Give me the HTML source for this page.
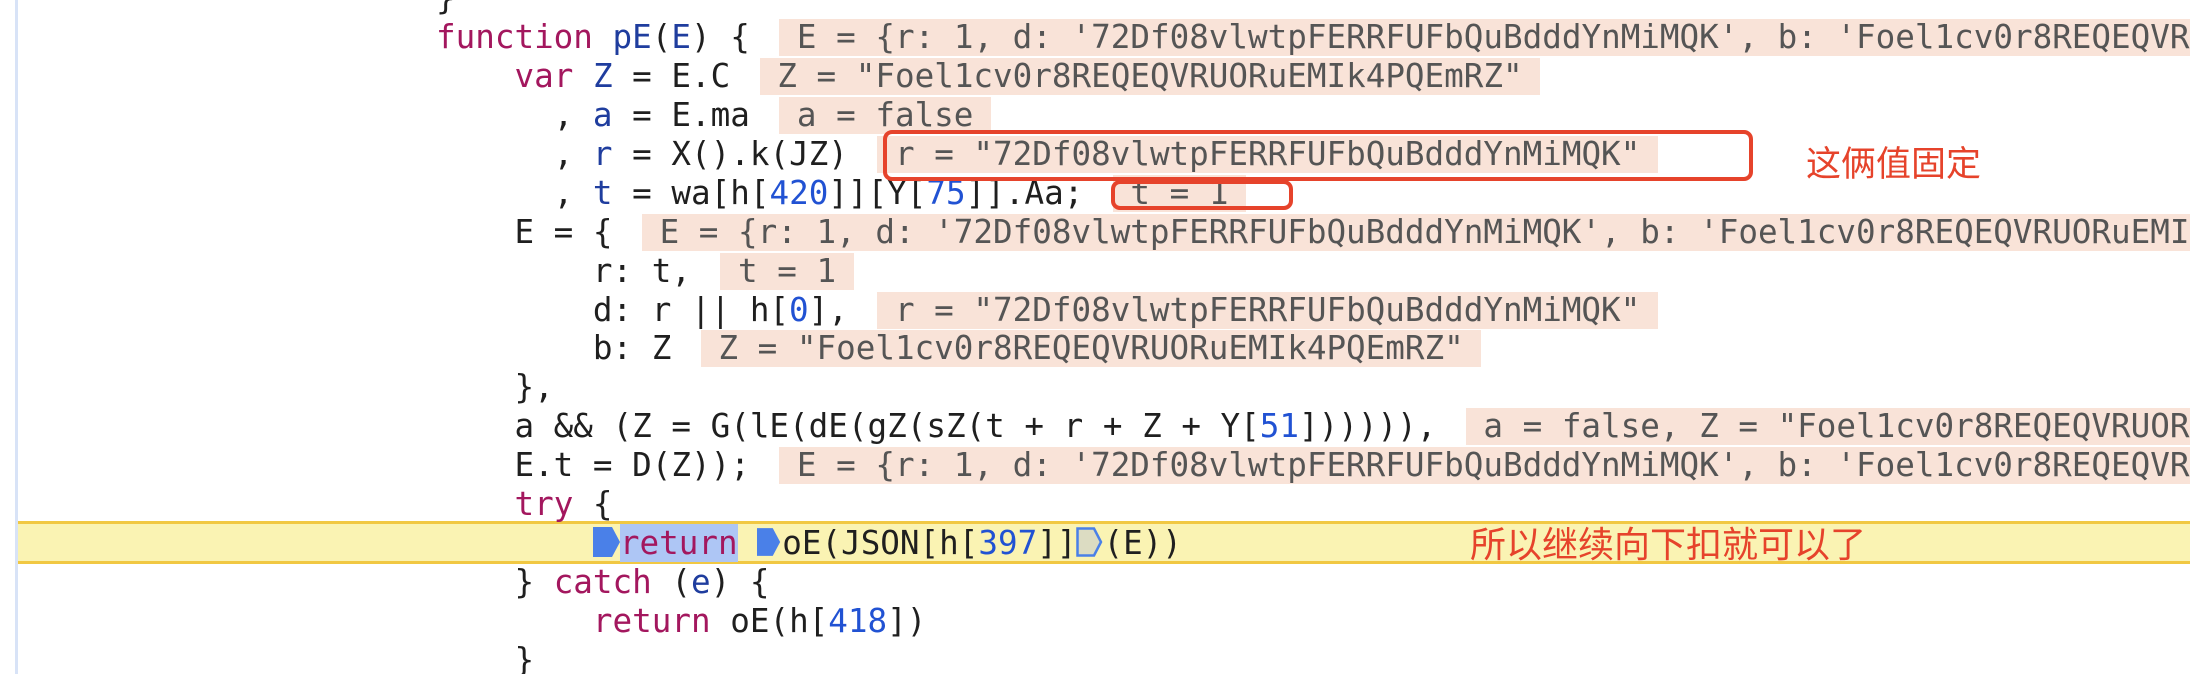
<!DOCTYPE html>
<html><head><meta charset="utf-8"><style>
html,body{margin:0;padding:0;width:2190px;height:674px;overflow:hidden;background:#fff;position:relative}
.gut{position:absolute;left:15px;top:0;width:3px;height:674px;background:#d8e3f7}
.hl{position:absolute;left:18px;right:0;top:521px;height:37px;background:#faf3b3;border-top:3px solid #f1c843;border-bottom:3px solid #f1c843}
.code{position:absolute;left:436px;top:-20.6px;font-family:"DejaVu Sans Mono","Liberation Mono",monospace;font-size:32.6px;line-height:38.9px;color:#1f1f1f;white-space:normal}
.l{height:38.9px;white-space:pre;overflow:visible}
.k{color:#a3175e}.d{color:#1f3d9e}.n{color:#2152d3}
.v{display:inline-block;height:37px;line-height:37px;vertical-align:top;margin-top:1px;background:#f9e3d8;color:#555;padding:0 0.9ch;margin-left:1.5ch}
.rb{position:absolute;border:4px solid #e6432b;border-radius:9px;box-sizing:border-box}
.zh{position:absolute;color:#e6432b;font-family:"Liberation Sans","Noto Sans CJK SC",sans-serif;white-space:nowrap}
.mk{display:inline-block;width:27px;height:30px;vertical-align:middle;margin-top:-6px}
.sel{background:#aec6f5}
</style></head><body>
<div class="gut"></div>
<div class="hl"></div>
<div class="code"><div class="l">}</div><div class="l"><span class="k">function</span> <span class="d">pE</span>(<span class="d">E</span>) {<span class="v">E = {r: 1, d: '72Df08vlwtpFERRFUFbQuBdddYnMiMQK', b: 'Foel1cv0r8REQEQVRUORuEMIk4PQEmRZ'}</span></div><div class="l">    <span class="k">var</span> <span class="d">Z</span> = E.C<span class="v">Z = "Foel1cv0r8REQEQVRUORuEMIk4PQEmRZ"</span></div><div class="l">      , <span class="d">a</span> = E.ma<span class="v">a = false</span></div><div class="l">      , <span class="d">r</span> = X().k(JZ)<span class="v">r = "72Df08vlwtpFERRFUFbQuBdddYnMiMQK"</span></div><div class="l">      , <span class="d">t</span> = wa[h[<span class="n">420</span>]][Y[<span class="n">75</span>]].Aa;<span class="v">t = 1</span></div><div class="l">    E = {<span class="v">E = {r: 1, d: '72Df08vlwtpFERRFUFbQuBdddYnMiMQK', b: 'Foel1cv0r8REQEQVRUORuEMIk4PQEmRZ'}</span></div><div class="l">        r: t,<span class="v">t = 1</span></div><div class="l">        d: r || h[<span class="n">0</span>],<span class="v">r = "72Df08vlwtpFERRFUFbQuBdddYnMiMQK"</span></div><div class="l">        b: Z<span class="v">Z = "Foel1cv0r8REQEQVRUORuEMIk4PQEmRZ"</span></div><div class="l">    },</div><div class="l">    a &amp;&amp; (Z = G(lE(dE(gZ(sZ(t + r + Z + Y[<span class="n">51</span>]))))),<span class="v">a = false, Z = "Foel1cv0r8REQEQVRUORuEMIk4PQEmRZ"</span></div><div class="l">    E.t = D(Z));<span class="v">E = {r: 1, d: '72Df08vlwtpFERRFUFbQuBdddYnMiMQK', b: 'Foel1cv0r8REQEQVRUORuEMIk4PQEmRZ'}</span></div><div class="l">    <span class="k">try</span> {</div><div class="l">        <svg class="mk" viewBox="0 0 27 30"><path d="M0 0H19L27 15L19 30H0Z" fill="#4a80e8"/></svg><span class="k sel">return</span> <svg class="mk" viewBox="0 0 27 30" style="width:25px"><path d="M0 0H17L25 15L17 30H0Z" fill="#4a80e8"/></svg>oE(JSON[h[<span class="n">397</span>]]<svg class="mk" viewBox="0 0 27 30"><path d="M1.5 1.5H18L25 15L18 28.5H1.5Z" fill="#dcdcc2" stroke="#4a80e8" stroke-width="2.5"/></svg>(E))</div><div class="l">    } <span class="k">catch</span> (<span class="d">e</span>) {</div><div class="l">        <span class="k">return</span> oE(h[<span class="n">418</span>])</div><div class="l">    }</div></div>
<div class="rb" style="left:883px;top:130px;width:870px;height:51px"></div>
<div class="rb" style="left:1111px;top:180px;width:182px;height:30px"></div>
<div class="zh" style="left:1806px;top:143px;font-size:35px;line-height:44px">这俩值固定</div>
<div class="zh" style="left:1470px;top:523px;font-size:36px;line-height:44px">所以继续向下扣就可以了</div>
</body></html>
